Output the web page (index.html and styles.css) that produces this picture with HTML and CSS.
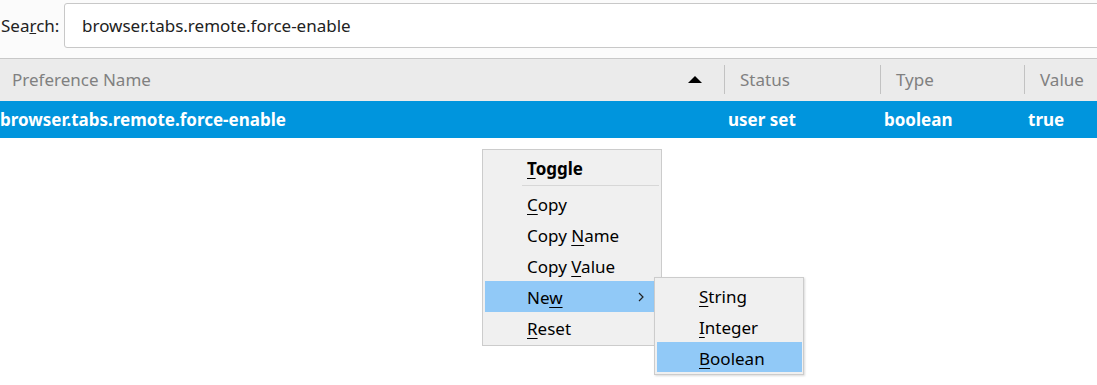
FILE: index.html
```html
<!DOCTYPE html>
<html>
<head>
<meta charset="utf-8">
<link rel="stylesheet" href="styles.css">
</head>
<body>
<div class="page">
  <div class="toolbar">
    <label class="search-label">Sea<u>r</u>ch:</label>
    <div class="search-input">browser.tabs.remote.force-enable</div>
  </div>
  <div class="table">
    <div class="thead">
      <div class="col col-name"><span>Preference Name</span><span class="sort"></span></div>
      <div class="col col-status"><span>Status</span></div>
      <div class="col col-type"><span>Type</span></div>
      <div class="col col-value"><span>Value</span></div>
    </div>
    <div class="row selected">
      <div class="cell cell-name">browser.tabs.remote.force-enable</div>
      <div class="cell cell-status">user set</div>
      <div class="cell cell-type">boolean</div>
      <div class="cell cell-value">true</div>
    </div>
  </div>

  <div class="menu">
    <div class="item bold"><span><u>T</u>oggle</span></div>
    <div class="sep"></div>
    <div class="item"><span><u>C</u>opy</span></div>
    <div class="item"><span>Copy <u>N</u>ame</span></div>
    <div class="item"><span>Copy <u>V</u>alue</span></div>
    <div class="item active has-sub"><span>Ne<u>w</u></span><svg class="chev" width="6" height="10" viewBox="0 0 6 10"><path d="M1 1 L5 5 L1 9" fill="none" stroke="#222" stroke-width="1.2"/></svg><div class="menu submenu"><div class="item"><span><u>S</u>tring</span></div><div class="item"><span><u>I</u>nteger</span></div><div class="item active"><span><u>B</u>oolean</span></div></div></div>
    <div class="item"><span><u>R</u>eset</span></div>
  </div>
</div>
</body>
</html>
```

FILE: styles.css
```css
* { box-sizing: border-box; }
html, body {
  margin: 0;
  padding: 0;
  width: 1097px;
  height: 385px;
  overflow: hidden;
  background: #ffffff;
  font-family: "Noto Sans", "Open Sans", sans-serif;
  font-size: 17px;
}
.page {
  position: relative;
  width: 1097px;
  height: 385px;
}
.toolbar {
  display: flex;
  align-items: center;
  gap: 8px;
  padding: 3px 0 10px 1px;
  background: #fbfbfb;
}
.search-label {
  color: #222;
  width: 55px;
}
.search-label u { text-decoration-thickness: 1px; }
.search-input {
  flex: 1;
  height: 45px;
  margin-right: -20px;
  border: 1px solid #c8c8c8;
  border-radius: 3px;
  background: #fff;
  padding: 0 0 0 17px;
  display: flex;
  align-items: center;
  color: #222;
}
.thead {
  display: flex;
  height: 43px;
  background: #ebebeb;
  border-top: 1px solid #c8c8c8;
  align-items: center;
}
.col {
  display: flex;
  align-items: center;
  height: 100%;
  color: #808080;
  position: relative;
  padding-bottom: 2px;
}
.col-name { width: 724px; padding-left: 12px; justify-content: space-between; padding-right: 22px; }
.col-status { width: 156px; padding-left: 16px; }
.col-type { width: 144px; padding-left: 16px; }
.col-value { flex: 1; padding-left: 16px; }
.col-status::before, .col-type::before, .col-value::before {
  content: "";
  position: absolute;
  left: 0;
  top: 6px;
  bottom: 7px;
  width: 1px;
  background: #c2c2c2;
}
.sort {
  width: 0;
  height: 0;
  border-left: 7px solid transparent;
  border-right: 7px solid transparent;
  border-bottom: 7px solid #000;
}
.row {
  display: flex;
  height: 37px;
  align-items: center;
  font-weight: bold;
}
.row.selected { background: #0095dd; color: #fff; }
.cell-name { width: 728px; padding-left: 0; }
.cell-status { width: 156px; }
.cell-type { width: 144px; }
.cell-value { flex: 1; }

.menu {
  position: absolute;
  left: 482px;
  top: 149px;
  width: 180px;
  background: #f0f0f0;
  border: 1px solid #cccccc;
  padding: 2px;
  color: #000;
  font-size: 17px;
}
.item {
  position: relative;
  height: 31px;
  display: flex;
  align-items: center;
  padding-left: 42px;
  padding-top: 2px;
}
.item u { text-decoration-thickness: 1px; text-underline-offset: 3px; }
.item.bold { font-weight: bold; }
.item.active { background: #91c9f7; }
.sep {
  height: 3px;
  margin-left: 37px;
  margin-top: 2px;
  border-top: 1px solid #d7d7d7;
}
.chev {
  position: absolute;
  right: 15px;
  top: 11px;
}
.submenu {
  left: 169px;
  top: -4px;
  width: 150px;
  padding: 2px 1px 2px 2px;
  box-shadow: 1px 1px 2px rgba(0,0,0,0.15);
}
.submenu .item { height: 31px; }
.submenu .item.active { height: 30px; }
```
